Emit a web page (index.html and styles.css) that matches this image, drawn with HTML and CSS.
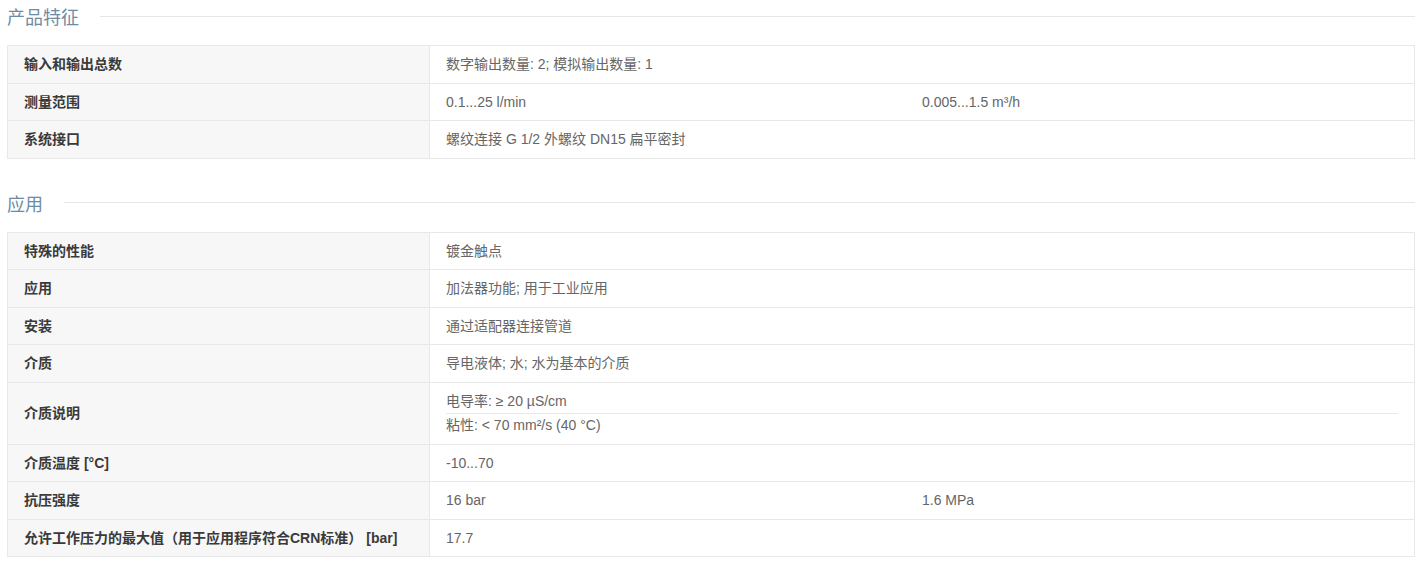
FILE: index.html
```html
<!DOCTYPE html>
<html lang="zh">
<head>
<meta charset="utf-8">
<title>产品特征</title>
<link rel="stylesheet" href="styles.css">
</head>
<body>
<section class="section">
  <h2 class="section-title"><span>产品特征</span></h2>
  <table class="spec">
    <colgroup><col class="col-label"><col></colgroup>
    <tbody>
      <tr><th>输入和输出总数</th><td>数字输出数量: 2; 模拟输出数量: 1</td></tr>
      <tr><th>测量范围</th><td><div class="split"><span>0.1...25 l/min</span><span>0.005...1.5 m³/h</span></div></td></tr>
      <tr><th>系统接口</th><td>螺纹连接 G 1/2 外螺纹 DN15 扁平密封</td></tr>
    </tbody>
  </table>
</section>
<section class="section second">
  <h2 class="section-title"><span>应用</span></h2>
  <table class="spec">
    <colgroup><col class="col-label"><col></colgroup>
    <tbody>
      <tr><th>特殊的性能</th><td>镀金触点</td></tr>
      <tr><th>应用</th><td>加法器功能; 用于工业应用</td></tr>
      <tr><th>安装</th><td>通过适配器连接管道</td></tr>
      <tr><th>介质</th><td>导电液体; 水; 水为基本的介质</td></tr>
      <tr><th>介质说明</th><td><div class="stack"><div class="stack-item">电导率: ≥ 20 µS/cm</div><div class="stack-item">粘性: &lt; 70 mm²/s (40 °C)</div></div></td></tr>
      <tr><th>介质温度 [°C]</th><td>-10...70</td></tr>
      <tr><th>抗压强度</th><td><div class="split"><span>16 bar</span><span>1.6 MPa</span></div></td></tr>
      <tr><th>允许工作压力的最大值（用于应用程序符合CRN标准） [bar]</th><td>17.7</td></tr>
    </tbody>
  </table>
</section>
</body>
</html>
```

FILE: styles.css
```css
html, body {
  margin: 0;
  padding: 0;
  background: #fff;
}
body {
  padding: 0 5px 0 7px;
  font-family: "Liberation Sans", "Noto Sans CJK SC", Arial, sans-serif;
  color: #666;
}
.section-title {
  display: flex;
  align-items: center;
  height: 32px;
  margin: 0 0 13px 0;
  font-size: 18px;
  font-weight: normal;
  color: #6e8ba4;
}
.section-title::after {
  content: "";
  flex: 1;
  height: 1px;
  background: #e6e6e6;
  margin-left: 21px;
}
.second {
  margin-top: 28px;
}
.spec {
  width: 100%;
  border-collapse: collapse;
  table-layout: fixed;
  font-size: 14px;
}
.col-label {
  width: 422px;
}
.spec th,
.spec td {
  border: 1px solid #e8e8e8;
  padding: 10.25px 16px 9.25px;
  line-height: 17px;
  text-align: left;
  vertical-align: middle;
}
.spec th {
  background: #f7f7f7;
  color: #3a3a3a;
  font-weight: bold;
}
.spec td {
  color: #666;
  background: #fff;
}
.split {
  display: grid;
  grid-template-columns: 1fr 1fr;
}
.stack-item:first-child {
  padding-bottom: 3px;
  border-bottom: 1px solid #e8e8e8;
}
.stack-item + .stack-item {
  padding-top: 3.5px;
}
```
